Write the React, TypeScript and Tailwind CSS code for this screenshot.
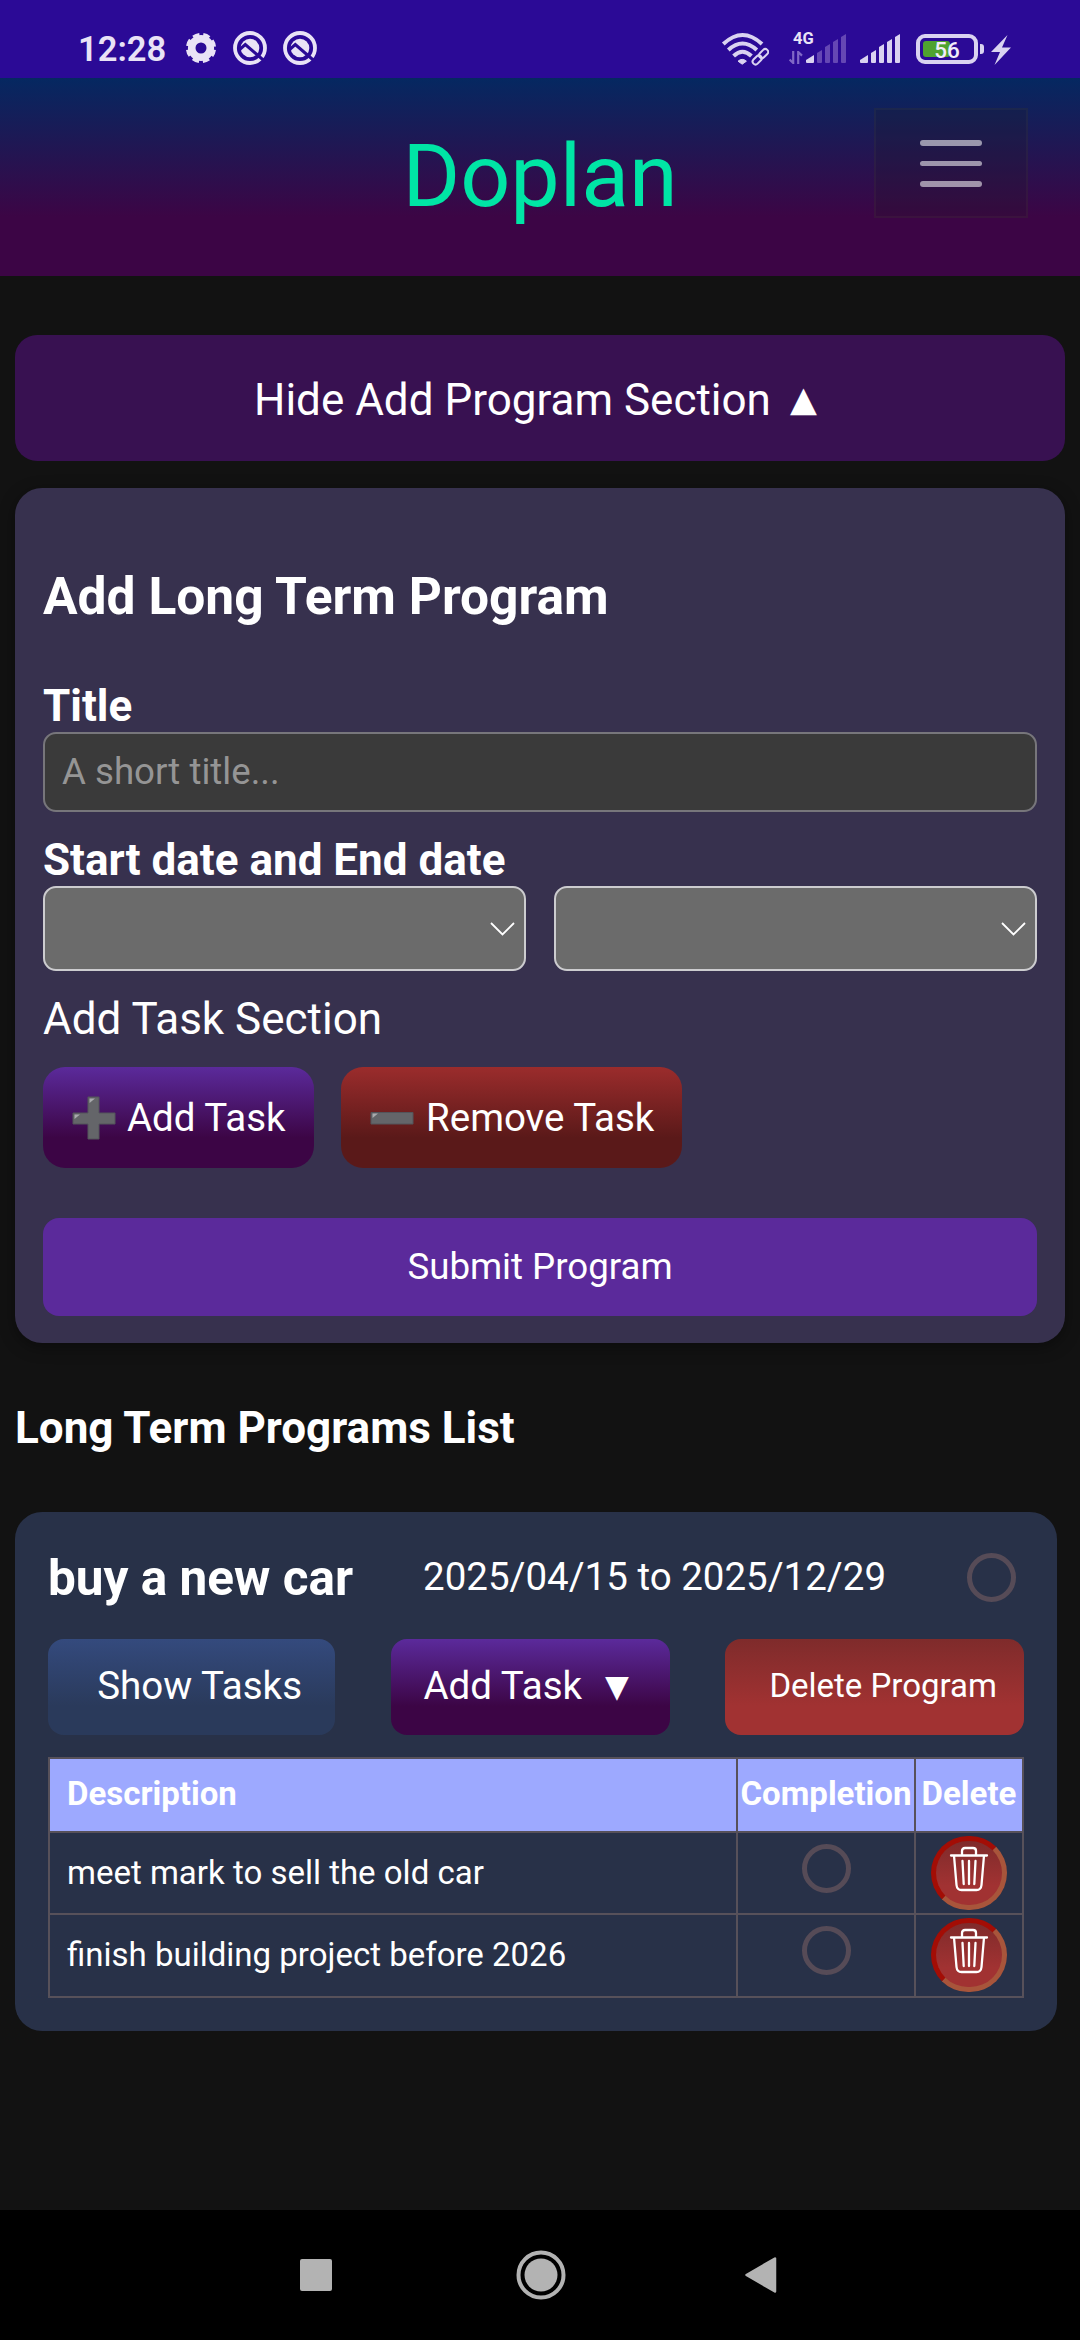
import React from "react";

const BAR_COUNT = [0, 1, 2, 3, 4];

function GearIcon() {
  return (
    <svg className="ml-[19px] h-[32px] w-[32px]" viewBox="0 0 32 32" fill="none">
      <circle cx="16" cy="16" r="9.3" stroke="#e9e3f6" strokeWidth="7.6" />
      <circle cx="16" cy="16" r="13.4" stroke="#e9e3f6" strokeWidth="3.4" strokeDasharray="6.6 3.924" strokeDashoffset="-1.9" />
    </svg>
  );
}

function QIcon() {
  return (
    <svg className="ml-[16px] h-[34px] w-[34px]" viewBox="0 0 34 34">
      <circle cx="17" cy="17" r="15" fill="none" stroke="#e9e3f6" strokeWidth="3.800" />
      <circle cx="17" cy="17" r="9.300" fill="#e9e3f6" />
      <path d="M5.500 19.500L12.300 13.600L32 30.500" fill="none" stroke="#2b0a96" strokeWidth="3" />
    </svg>
  );
}

function WifiIcon() {
  return (
    <svg className="h-[34px] w-[48px]" viewBox="0 0 48 34" fill="none" stroke="#dad3f1">
      <path d="M2.3 12Q21.5 -6 41 12" strokeWidth="4" />
      <path d="M7.3 18Q21.5 5 35.8 18" strokeWidth="4" />
      <path d="M12.6 24Q21.5 15.500 30.4 24" strokeWidth="4" />
      <path d="M17 29.200Q21.200 25.500 25.400 29.200L21.200 32.200Z" fill="#dad3f1" strokeWidth="1" />
      <g transform="rotate(-45 39.500 24.500)" strokeWidth="2">
        <rect x="29.500" y="21.700" width="10.500" height="5.800" rx="2.900" />
        <rect x="38.500" y="21.700" width="10.500" height="5.800" rx="2.900" />
      </g>
    </svg>
  );
}

function SignalBars({ level }: { level: number }) {
  const xs = [0, 11, 19, 27, 35];
  const tops = [21, 16, 10, 5, 0];
  return (
    <svg className="h-[30px] w-[41px]" viewBox="0 0 41 30">
      {BAR_COUNT.map((i) => {
        const w = i === 0 ? 8 : 5;
        const drop = i === 0 ? 5 : 3;
        return (
          <path
            key={i}
            d={`M${xs[i]} ${tops[i] + drop}L${xs[i] + w} ${tops[i]}V28Q${xs[i] + w} 29 ${xs[i] + w - 1} 29H${xs[i] + 1}Q${xs[i]} 29 ${xs[i]} 28Z`}
            fill={i < level ? "#dad3f1" : "#6547b4"}
          />
        );
      })}
    </svg>
  );
}

function StatusBar() {
  return (
    <div className="flex h-[78px] bg-[#2b0a96] pl-[78px]">
      <div className="mt-[29px] h-[40px] w-[88px] text-[34.500px] leading-[40px] font-semibold whitespace-nowrap text-[#e9e3f6]">12:28</div>
      <div className="mt-[31px] flex h-[34px] items-center">
        <GearIcon />
        <QIcon />
        <QIcon />
      </div>
      <div className="mt-[32px] ml-auto flex h-[34px] pr-[68px]">
        <WifiIcon />
        <div className="ml-[20px] w-[17px]">
          <div className="ml-[4px] h-[12px] w-[24px] text-[16.500px] leading-[13px] font-bold text-[#e9e3f6]">4G</div>
          <svg className="mt-[7px] h-[13px] w-[14px]" viewBox="0 0 14 13" fill="none" stroke="#8068c6" strokeWidth="2.200">
            <path d="M4.200 0V12L0.600 8.600M9.200 13V1L13 4.600" />
          </svg>
        </div>
        <div className="mt-[2px] flex gap-[13px]">
          <SignalBars level={1} />
          <SignalBars level={5} />
        </div>
        <div className="relative mt-[2px] ml-[15px] h-[30px] w-[62px] rounded-[9px] border-[4px] border-[#dad3f1]">
          <div className="mt-[3px] ml-[3px] h-[16px] w-[27px] rounded-[3px] bg-[#4fa22f]" />
          <div className="absolute inset-0 text-center text-[22.500px] leading-[24px] font-medium text-[#f1edfa]">56</div>
        </div>
        <div className="mt-[12px] ml-[2px] h-[10px] w-[4px] rounded-r-[3px] bg-[#dad3f1]" />
        <svg className="mt-[3px] ml-[7px] h-[30px] w-[21px]" viewBox="0 0 21 30">
          <path d="M16.500 0L0 17H9L3.500 30L20 12.500H11Z" fill="#dad3f1" />
        </svg>
      </div>
    </div>
  );
}

function Header() {
  return (
    <header className="grid h-[198px] grid-cols-[1fr_auto_1fr] bg-[linear-gradient(180deg,#052861_0%,#3c0545_70%)]">
      <div />
      <h1 className="mt-[46px] text-[88px] leading-[104px] text-[#00e5a5]">Doplan</h1>
      <button className="mt-[30px] mr-[52px] flex h-[110px] w-[154px] flex-col items-center gap-[15px] justify-self-end border-2 border-[#80805014] bg-[#20201f33] pt-[30px]">
        <span className="h-[6px] w-[62px] rounded-full bg-white/55" />
        <span className="h-[5px] w-[62px] rounded-full bg-white/55" />
        <span className="h-[6px] w-[62px] rounded-full bg-white/55" />
      </button>
    </header>
  );
}

function DateSelect() {
  return (
    <div className="flex h-[85px] flex-1 items-start justify-end rounded-[13px] border-2 border-[#cccccf] bg-[#6b6b6b]">
      <svg className="mt-[33px] mr-[9px] h-[16px] w-[25px]" viewBox="0 0 25 16" fill="none" stroke="#fff" strokeWidth="1.800">
        <path d="M1 2L12.500 13.500L24 2" />
      </svg>
    </div>
  );
}

function EmojiSign({ plus }: { plus?: boolean }) {
  return (
    <svg className="h-[44px] w-[44px]" viewBox="0 0 44 44">
      <path
        d={plus ? "M16 1H27V17H43V28H27V43H16V28H1V17H16Z" : "M1 16.500H43V28H1Z"}
        fill="#646569"
        stroke="#53545a"
        strokeWidth="1"
        strokeLinejoin="round"
      />
      {plus && <path d="M17.500 7V2.500H23Z" fill="#a9aaad" />}
      <path d={plus ? "M2.500 23V18.500H8Z" : "M2.500 22V17.500H8Z"} fill="#a9aaad" />
    </svg>
  );
}

function ProgramForm() {
  return (
    <form className="mt-[27px] flex h-[855px] flex-col rounded-[27px] bg-[#37314e] px-[28px] shadow-[0_4px_16px_#00000060]">
      <h2 className="mt-[79px] text-[51.500px] leading-[60px] font-bold">Add Long Term Program</h2>
      <label className="mt-[53px] text-[44px] leading-[52px] font-bold">Title</label>
      <div className="flex h-[80px] items-center rounded-[13px] border-2 border-[#77767b] bg-[#3a3a3a] pb-[2px] pl-[17px] text-[36.670px] text-[#959595]">
        A short title...
      </div>
      <label className="mt-[22px] text-[44px] leading-[52px] font-bold">Start date and End date</label>
      <div className="flex gap-[28px]">
        <DateSelect />
        <DateSelect />
      </div>
      <div className="mt-[22px] text-[44px] leading-[52px]">Add Task Section</div>
      <div className="mt-[22px] flex gap-[27px] text-[38.500px]">
        <button type="button" className="flex h-[101px] w-[271px] items-center rounded-[22px] bg-[linear-gradient(180deg,#5b2a9b_0%,#3c0545_70%)] pl-[29px] whitespace-nowrap">
          <EmojiSign plus />
          <span className="ml-[11px]">Add Task</span>
        </button>
        <button type="button" className="flex h-[101px] w-[341px] items-center rounded-[22px] bg-[linear-gradient(180deg,#9b2c2c_0%,#5a1919_70%)] pl-[29px] whitespace-nowrap">
          <EmojiSign />
          <span className="ml-[12px]">Remove Task</span>
        </button>
      </div>
      <button type="button" className="mt-[50px] h-[98px] rounded-[16px] bg-[#5b2a9b] pb-[2px] text-[36.670px]">Submit Program</button>
    </form>
  );
}

function Ring() {
  return <span className="block h-[49px] w-[49px] rounded-full border-[5px] border-[#564b57]" />;
}

function TrashButton() {
  return (
    <button className="flex h-[74px] w-[76px] justify-center rounded-full border-[5px] border-t-[#a30d05] border-r-[#a8553b] border-b-[#a8553b] border-l-[#a30d05] bg-[linear-gradient(180deg,#7f2b2b_0%,#a13232_70%)] pt-[5px]">
      <svg className="h-[46px] w-[40px]" viewBox="0 0 40 46" fill="none" stroke="#fff" strokeWidth="2.300" strokeLinecap="round" strokeLinejoin="round">
        <path d="M2 9.500H38M5 9.500L7.500 39Q8 44 12.500 44H27.500Q32 44 32.500 39L35 9.500" />
        <path d="M13 9V5Q13 2 16 2H24Q27 2 27 5V9" />
        <path d="M13.500 15L14.700 38M20 15V38M26.500 15L25.300 38" />
      </svg>
    </button>
  );
}

const TASKS = ["meet mark to sell the old car", "finish building project before 2026"];

function TaskTable() {
  return (
    <div className="mt-[22px] grid h-[241px] grid-cols-[686px_176px_106px] grid-rows-[72px_80px_81px] gap-[2px] border-2 border-[#57515a] bg-[#57515a] text-[33px] leading-[40px]">
      <div className="bg-[#9da9ff] pt-[15px] pl-[17px] font-bold">Description</div>
      <div className="bg-[#9da9ff] pt-[15px] text-center font-bold">Completion</div>
      <div className="bg-[#9da9ff] pt-[15px] text-center font-bold">Delete</div>
      {TASKS.map((task) => (
        <React.Fragment key={task}>
          <div className="bg-[#283148] pt-[20px] pl-[17px]">{task}</div>
          <div className="flex justify-center bg-[#283148] pt-[11px] pl-[1px]">
            <Ring />
          </div>
          <div className="flex justify-center bg-[#283148] pt-[3px]">
            <TrashButton />
          </div>
        </React.Fragment>
      ))}
    </div>
  );
}

function ProgramCard() {
  return (
    <section className="mt-[58px] mr-[8px] h-[519px] rounded-[27px] bg-[#283148] px-[33px] pt-[35px]">
      <div className="flex h-[60px] items-center pr-[8px]">
        <h3 className="w-[375px] pt-[1px] text-[49.500px] leading-[60px] font-bold">buy a new car</h3>
        <div className="text-[38.500px]">2025/04/15 to 2025/12/29</div>
        <div className="ml-auto">
          <Ring />
        </div>
      </div>
      <div className="mt-[32px] flex justify-between text-[38.500px] whitespace-nowrap">
        <button className="h-[96px] w-[287px] rounded-[16px] bg-[linear-gradient(180deg,#344a7d_0%,#2a3a5b_70%)] pr-[33px] pb-[3px] text-right">Show Tasks</button>
        <button className="flex h-[96px] w-[279px] items-center rounded-[16px] bg-[linear-gradient(180deg,#5b2a9b_0%,#3c0545_70%)] pb-[3px] pl-[33px]">
          Add Task
          <span className="ml-[23px] font-['DejaVu_Sans'] text-[31px] leading-[40px]">▼</span>
        </button>
        <button className="h-[96px] w-[299px] rounded-[16px] bg-[linear-gradient(180deg,#7f2b2b_0%,#a13232_70%)] pr-[27px] pb-[3px] text-right text-[33px]">Delete Program</button>
      </div>
      <TaskTable />
    </section>
  );
}

function NavBar() {
  return (
    <nav className="mt-auto flex h-[130px] items-center bg-black pl-[300px]">
      <div className="h-[32px] w-[32px] rounded-[2px] bg-[#b3b3b3]" />
      <svg className="ml-[184px] h-[50px] w-[50px]" viewBox="0 0 50 50">
        <circle cx="25" cy="25" r="22.500" fill="none" stroke="#b3b3b3" strokeWidth="4" />
        <circle cx="25" cy="25" r="16.500" fill="#b3b3b3" />
      </svg>
      <svg className="ml-[178px] h-[38px] w-[33px]" viewBox="0 0 33 38">
        <path d="M2.500 19L31 2.500V35.500Z" fill="#b3b3b3" stroke="#b3b3b3" strokeWidth="2.500" strokeLinejoin="round" />
      </svg>
    </nav>
  );
}

export default function App() {
  return (
    <div className="flex h-[2340px] w-[1080px] flex-col overflow-hidden bg-[#121212] font-[Roboto,sans-serif] text-white">
      <StatusBar />
      <Header />
      <main className="px-[15px] pt-[59px]">
        <button className="flex h-[126px] w-full items-center rounded-[22px] bg-[#381151] pt-[4px] pl-[239px] text-[44px] leading-[52px]">
          Hide Add Program Section
          <span className="ml-[19px] pb-[3px] font-['DejaVu_Sans'] text-[35px] leading-[52px]">▲</span>
        </button>
        <ProgramForm />
        <h2 className="mt-[59px] text-[44px] leading-[52px] font-bold">Long Term Programs List</h2>
        <ProgramCard />
      </main>
      <NavBar />
    </div>
  );
}
